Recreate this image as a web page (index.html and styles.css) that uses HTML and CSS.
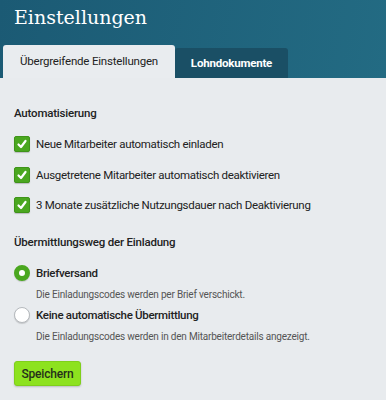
FILE: index.html
```html
<!DOCTYPE html>
<html lang="de">
<head>
    <meta charset="UTF-8">
    <meta name="viewport" content="width=device-width, initial-scale=1.0">
    <title>Einstellungen</title>
    <link rel="stylesheet" href="styles.css">
</head>
<body>
    <div class="header">
        <h1>Einstellungen</h1>
        <div class="tabs">
            <div class="tab active">Übergreifende Einstellungen</div>
            <div class="tab">Lohndokumente</div>
        </div>
    </div>

    <div class="content">
        <h2>Automatisierung</h2>
        <div class="checks">
            <label class="check">
                <span class="box">
                    <svg width="12" height="12" viewBox="0 0 12 12" fill="none" stroke="white" stroke-width="2.2" stroke-linecap="round" stroke-linejoin="round">
                        <polyline points="2.5 6.5 5 9 9.5 3"/>
                    </svg>
                </span>
                Neue Mitarbeiter automatisch einladen
            </label>
            <label class="check">
                <span class="box">
                    <svg width="12" height="12" viewBox="0 0 12 12" fill="none" stroke="white" stroke-width="2.2" stroke-linecap="round" stroke-linejoin="round">
                        <polyline points="2.5 6.5 5 9 9.5 3"/>
                    </svg>
                </span>
                Ausgetretene Mitarbeiter automatisch deaktivieren
            </label>
            <label class="check">
                <span class="box">
                    <svg width="12" height="12" viewBox="0 0 12 12" fill="none" stroke="white" stroke-width="2.2" stroke-linecap="round" stroke-linejoin="round">
                        <polyline points="2.5 6.5 5 9 9.5 3"/>
                    </svg>
                </span>
                3 Monate zusätzliche Nutzungsdauer nach Deaktivierung
            </label>
        </div>

        <h2>Übermittlungsweg der Einladung</h2>
        <div class="radios">
            <div class="radio-item">
                <label class="radio">
                    <span class="dot checked"></span>
                    Briefversand
                </label>
                <p class="hint">Die Einladungscodes werden per Brief verschickt.</p>
            </div>
            <div class="radio-item">
                <label class="radio">
                    <span class="dot"></span>
                    Keine automatische Übermittlung
                </label>
                <p class="hint">Die Einladungscodes werden in den Mitarbeiterdetails angezeigt.</p>
            </div>
        </div>

        <button class="save">Speichern</button>
    </div>
</body>
</html>
```

FILE: styles.css
```css
* {
    margin: 0;
    padding: 0;
    box-sizing: border-box;
}

body {
    font-family: Roboto, "Noto Sans", sans-serif;
    background-color: #e8ebee;
    color: #222;
    min-height: 100vh;
}

.header {
    background: linear-gradient(100deg, #1b5a74, #236b83);
    padding-left: 3px;
}

.header h1 {
    font-family: "DejaVu Serif", serif;
    font-weight: normal;
    font-size: 19px;
    color: #fff;
    padding: 2px 0 0 11px;
    height: 45px;
    line-height: 30px;
}

.tabs {
    display: flex;
    align-items: flex-end;
}

.tab {
    height: 30px;
    width: 113px;
    display: flex;
    align-items: center;
    justify-content: center;
    background-color: #1a4f65;
    color: #fff;
    font-size: 11.5px;
    letter-spacing: -0.2px;
    font-weight: bold;
    border-radius: 3px 3px 0 0;
}

.tab.active {
    height: 33px;
    width: 172px;
    background-color: #e9ecef;
    color: #222;
    font-weight: normal;
    padding-bottom: 2px;
}

.content {
    padding: 26px 14px 0;
}

h2 {
    font-size: 11.5px;
    letter-spacing: -0.2px;
    line-height: 18px;
    font-weight: 500;
    margin-bottom: 13px;
}

.checks {
    display: flex;
    flex-direction: column;
    gap: 12.5px;
    margin-bottom: 19px;
}

.check,
.radio {
    display: flex;
    align-items: center;
    gap: 6px;
    font-size: 11.5px;
    letter-spacing: -0.3px;
    line-height: 18px;
}

.box {
    width: 16px;
    height: 16px;
    border-radius: 2px;
    background-color: #4aa71f;
    border: 1px solid #3f9419;
    box-shadow: 0 1px 1px rgba(0, 0, 0, 0.2);
    display: flex;
    align-items: center;
    justify-content: center;
}

.radios {
    display: flex;
    flex-direction: column;
    gap: 4px;
}

.radio {
    font-weight: 500;
}

.dot {
    width: 16px;
    height: 16px;
    border-radius: 50%;
    background-color: #fff;
    border: 1px solid #b5b9bd;
    box-shadow: 0 1px 1px rgba(0, 0, 0, 0.15);
}

.dot.checked {
    border: 5px solid #4aa71f;
}

.hint {
    font-size: 10px;
    letter-spacing: -0.2px;
    line-height: 14px;
    color: #555;
    margin: 6px 0 0 22px;
}

.save {
    margin-top: 17px;
    height: 25px;
    width: 67px;
    background-color: #8de21f;
    border: 1px solid #7fcf1b;
    border-radius: 3px;
    font-family: inherit;
    font-size: 12px;
    letter-spacing: -0.2px;
    font-weight: 500;
    color: #25301a;
    box-shadow: 0 1px 2px rgba(0, 0, 0, 0.2);
}
```
